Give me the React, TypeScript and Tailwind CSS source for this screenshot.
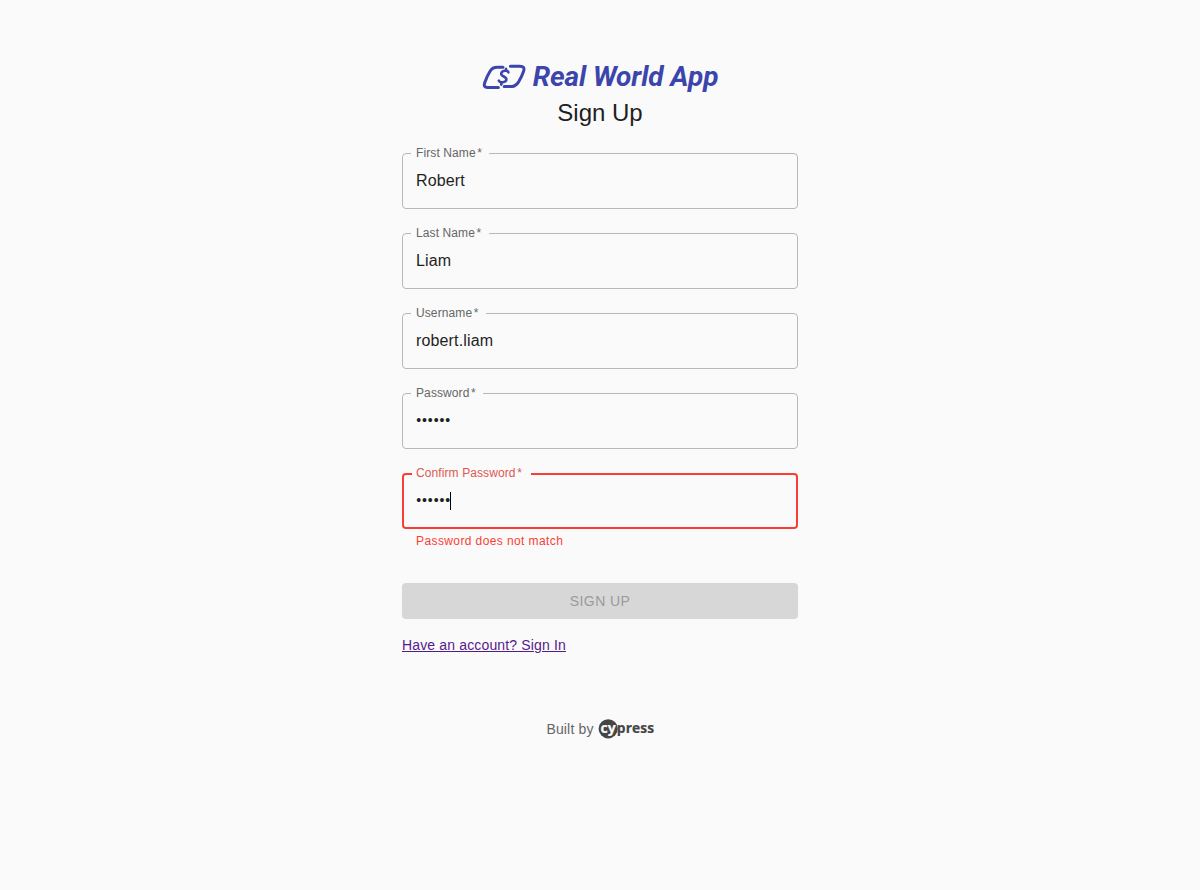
type FieldProps = {
  label: string;
  value: string;
  notch: string;
  secret?: boolean;
  error?: boolean;
  focused?: boolean;
};

const fields: FieldProps[] = [
  { label: 'First Name', value: 'Robert', notch: 'w-[78px]' },
  { label: 'Last Name', value: 'Liam', notch: 'w-[78px]' },
  { label: 'Username', value: 'robert.liam', notch: 'w-[75px]' },
  { label: 'Password', value: '••••••', notch: 'w-[72px]', secret: true },
  { label: 'Confirm Password', value: '••••••', notch: 'w-[119px]', secret: true, error: true, focused: true },
];

function Field({ label, value, notch, secret, error, focused }: FieldProps) {
  return (
    <fieldset
      className={`rounded-[4px] px-2 ${error ? 'mt-px h-[62px] border-2 border-[#f93f35]' : 'h-[63px] border border-[#b8b8b8]'}`}
    >
      <legend
        className={`h-[14px] whitespace-nowrap text-[12px] tracking-[0.1px] ${notch} ${
          error ? 'pl-1 leading-[12px] text-[#dc5850]' : 'pl-[5px] leading-[14px] text-[#666]'
        }`}
      >
        {label}
        <span className="ml-[1.5px]">*</span>
      </legend>
      <div
        className={`flex items-center text-[16px] leading-[19px] tracking-[0.15px] text-[#1f1f1f] ${
          error ? 'mt-[10px] pl-1' : 'mt-[11px] pl-[5px]'
        }`}
      >
        <span className={secret ? 'h-5 pl-[0.3px] text-[14px] tracking-[0.88px]' : ''}>{value}</span>
        {focused && <span className="-ml-[1.1px] h-[18px] w-px bg-black" />}
      </div>
    </fieldset>
  );
}

function BrandMark() {
  return (
    <svg width="44" height="26" viewBox="0 0 44 26" fill="none" stroke="#3b45ab" strokeWidth="3" strokeLinecap="round" strokeLinejoin="round">
      <path d="M21 3.3H15.5Q10.5 3.2 8.2 7Q4.8 12.5 2.8 18.4Q.9 23.4 5.6 23.4H16.4" />
      <path d="M28.4 2.2H38Q43.2 2.2 41.6 7.2Q39.8 12.5 36.8 17.6Q33.7 22.4 30 22.4H22.2" />
      <path d="M26.4 8.4C26 5.8 19.6 6.3 19.2 9.6C18.9 12.6 24.8 12.4 24.4 15.7C24 18.7 17.8 19 16.8 16.7M24.1 4.9L23.7 6.3M19.7 18.6L19.2 20.6" strokeWidth="2.6" />
    </svg>
  );
}

function CypressLogo() {
  return (
    <svg width="58" height="24" viewBox="0 0 58 24" className="ml-1 overflow-visible">
      <circle cx="10.2" cy="11.8" r="9.6" fill="#454545" />
      <g fontFamily="'Open Sans', 'Noto Sans', sans-serif" fontWeight="700" fontSize="15">
        <text x="2.5" y="16" fill="#fafafa" stroke="#fafafa" strokeWidth="0.2" textLength="15.5" lengthAdjust="spacingAndGlyphs">cy</text>
        <text x="18.8" y="16" fill="#454545" stroke="#454545" strokeWidth="0.2" textLength="37.5" lengthAdjust="spacingAndGlyphs">press</text>
      </g>
    </svg>
  );
}

export default function App() {
  return (
    <main className="flex min-h-screen flex-col items-center bg-[#fafafa] pt-16 font-['Liberation_Sans',Arial,sans-serif]">
      <div className="flex h-[26px] items-center gap-[7px]">
        <BrandMark />
        <span className="whitespace-nowrap font-[Roboto,sans-serif] text-[28px] font-bold italic leading-[26px] tracking-[-0.1px] text-[#3b45ab]">
          Real World App
        </span>
      </div>
      <h1 className="mt-[7px] text-[24px] leading-8 text-[#1f1f1f]">Sign Up</h1>
      <form className="mt-[17px] flex w-[396px] flex-col">
        <div className="flex flex-col gap-[17px]">
          {fields.map((field) => (
            <Field key={field.label} {...field} />
          ))}
        </div>
        <p className="mt-[5px] pl-[14px] text-[12px] leading-[15px] tracking-[0.4px] text-[#f93f35]">Password does not match</p>
        <button type="button" disabled className="mt-[34px] h-9 rounded-[4px] bg-[#d7d7d7] text-[14px] tracking-[0.4px] text-[#9b9b9b]">
          SIGN UP
        </button>
        <a href="#signin" className="mt-4 self-start text-[14px] leading-5 tracking-[0.15px] text-[#551a8b] underline">
          Have an account? Sign In
        </a>
      </form>
      <footer className="mt-[62px] flex items-center pl-[2px] text-[14px] leading-5 tracking-[0.15px] text-[#666]">
        Built by
        <CypressLogo />
      </footer>
    </main>
  );
}
